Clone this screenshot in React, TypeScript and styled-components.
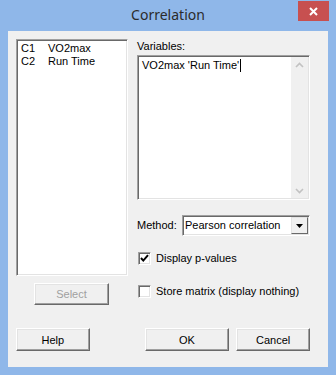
import React from "react";
import styled, { createGlobalStyle } from "styled-components";

const GlobalStyle = createGlobalStyle`
  html, body {
    margin: 0;
    padding: 0;
  }
  body {
    font-family: "Liberation Sans", Arial, sans-serif;
    font-size: 11px;
    color: #000;
  }
  * {
    box-sizing: border-box;
  }
`;

const App = () => {
  return (
    <>
      <GlobalStyle />
      <Window>
        <TitleBar>
          <Title>Correlation</Title>
          <CloseBtn>
            <svg width="9" height="9" viewBox="0 0 9 9">
              <path d="M1 1 L8 8 M8 1 L1 8" stroke="#fff" strokeWidth="2" />
            </svg>
          </CloseBtn>
        </TitleBar>
        <Client>
          <LeftCol>
            <ListBox>
              <ListRow>
                <span>C1</span>
                <span>VO2max</span>
              </ListRow>
              <ListRow>
                <span>C2</span>
                <span>Run Time</span>
              </ListRow>
            </ListBox>
            <Button w="75px" h="22px" ml="18px" disabled>
              Select
            </Button>
          </LeftCol>
          <RightCol>
            <Label>Variables:</Label>
            <TextBox>
              <TextArea>
                VO2max 'Run Time'<Caret />
              </TextArea>
              <ScrollBar>
                <svg width="9" height="6" viewBox="0 0 9 6">
                  <path d="M1 5 L4.5 1.5 L8 5" stroke="#c2c2c2" strokeWidth="1.6" fill="none" />
                </svg>
                <svg width="9" height="6" viewBox="0 0 9 6">
                  <path d="M1 1 L4.5 4.5 L8 1" stroke="#c2c2c2" strokeWidth="1.6" fill="none" />
                </svg>
              </ScrollBar>
            </TextBox>
            <MethodRow>
              <Label>Method:</Label>
              <Combo>
                <ComboText>Pearson correlation</ComboText>
                <ComboBtn>
                  <svg width="7" height="4" viewBox="0 0 7 4">
                    <path d="M0 0 L7 0 L3.5 4 Z" fill="#000" />
                  </svg>
                </ComboBtn>
              </Combo>
            </MethodRow>
            <CheckRow mt="16px">
              <CheckBox>
                <svg width="11" height="11" viewBox="0 0 11 11">
                  <path d="M2 5 L4.3 7.6 L9 2.2" stroke="#000" strokeWidth="2" fill="none" />
                </svg>
              </CheckBox>
              Display p-values
            </CheckRow>
            <CheckRow mt="20px">
              <CheckBox />
              Store matrix (display nothing)
            </CheckRow>
          </RightCol>
          <ButtonRow>
            <Button w="74px" h="23px">Help</Button>
            <Button w="85px" h="23px" ml="55px">OK</Button>
            <Button w="74px" h="23px" ml="7px">Cancel</Button>
          </ButtonRow>
        </Client>
      </Window>
    </>
  );
};

export default App;

const Window = styled.div`
  width: 336px;
  height: 375px;
  background: #8fb7e9;
  display: flex;
  flex-direction: column;
`;

const TitleBar = styled.div`
  height: 31px;
  display: grid;
  grid-template-columns: 1fr auto 1fr;
  align-items: start;
`;

const Title = styled.div`
  grid-column: 2;
  font-family: "Noto Sans", "Open Sans", sans-serif;
  font-size: 14px;
  line-height: 30px;
  color: #2b2b2b;
`;

const CloseBtn = styled.div`
  grid-column: 3;
  justify-self: end;
  width: 31px;
  height: 20px;
  margin-top: 1px;
  margin-right: 7px;
  background: #c75050;
  display: flex;
  align-items: center;
  justify-content: center;
`;

const Client = styled.div`
  margin: 0 8px 8px 8px;
  height: 336px;
  background: #f0f0f0;
  display: grid;
  grid-template-columns: 112px 173px;
  grid-template-rows: 266px auto;
  column-gap: 9px;
  row-gap: 23px;
  padding: 8px 0 0 8px;
`;

const LeftCol = styled.div`
  display: flex;
  flex-direction: column;
  gap: 7px;
`;

const sunken = `
  border-top: 1px solid #a0a0a0;
  border-left: 1px solid #a0a0a0;
  border-right: 1px solid #ffffff;
  border-bottom: 1px solid #ffffff;
  box-shadow: inset 1px 1px 0 #696969, inset -1px -1px 0 #e3e3e3;
`;

const ListBox = styled.div`
  height: 237px;
  background: #fff;
  ${sunken}
  padding: 2px 2px;
`;

const ListRow = styled.div`
  display: grid;
  grid-template-columns: 27px 1fr;
  line-height: 13px;
  padding-left: 2px;
`;

const Button = styled.button<{ w: string; h: string; ml?: string }>`
  width: ${({ w }) => w};
  height: ${({ h }) => h};
  margin-left: ${({ ml }) => ml || "0"};
  background: #f0f0f0;
  font-family: "Liberation Sans", Arial, sans-serif;
  font-size: 11px;
  color: #000;
  padding: 0;
  border-top: 1px solid #ffffff;
  border-left: 1px solid #ffffff;
  border-right: 1px solid #696969;
  border-bottom: 1px solid #696969;
  box-shadow: inset -1px -1px 0 #a0a0a0, inset 1px 1px 0 #e3e3e3;
  &:disabled {
    color: #a0a0a0;
  }
`;

const RightCol = styled.div`
  display: flex;
  flex-direction: column;
`;

const Label = styled.div`
  line-height: 13px;
  margin-top: 1px;
  margin-bottom: 2px;
`;

const TextBox = styled.div`
  height: 145px;
  background: #fff;
  ${sunken}
  display: flex;
`;

const TextArea = styled.div`
  flex: 1;
  padding: 3px 0 0 4px;
  line-height: 13px;
`;

const Caret = styled.span`
  display: inline-block;
  width: 1px;
  height: 13px;
  background: #000;
  vertical-align: top;
  margin-left: 1px;
`;

const ScrollBar = styled.div`
  width: 17px;
  margin: 1px 1px 1px 0;
  background: #f0f0f0;
  display: flex;
  flex-direction: column;
  justify-content: space-between;
  align-items: center;
  padding: 5px 0 4px;
`;

const MethodRow = styled.div`
  margin-top: 15px;
  display: flex;
  align-items: center;
  justify-content: space-between;
  & > div:first-child {
    margin: 0;
  }
`;

const Combo = styled.div`
  width: 128px;
  height: 21px;
  background: #fff;
  ${sunken}
  display: flex;
  align-items: center;
`;

const ComboText = styled.div`
  flex: 1;
  padding-left: 2px;
  line-height: 13px;
`;

const ComboBtn = styled.div`
  width: 17px;
  height: 17px;
  margin-right: 1px;
  background: #f0f0f0;
  border-top: 1px solid #e3e3e3;
  border-left: 1px solid #e3e3e3;
  border-right: 1px solid #696969;
  border-bottom: 1px solid #696969;
  display: flex;
  align-items: center;
  justify-content: center;
`;

const CheckRow = styled.div<{ mt: string }>`
  margin-top: ${({ mt }) => mt};
  display: flex;
  align-items: center;
  gap: 5px;
  line-height: 13px;
  padding-left: 1px;
`;

const CheckBox = styled.div`
  width: 13px;
  height: 13px;
  background: #fff;
  ${sunken}
  display: flex;
  align-items: center;
  justify-content: center;
`;

const ButtonRow = styled.div`
  grid-column: 1 / -1;
  display: flex;
  align-items: flex-start;
`;
